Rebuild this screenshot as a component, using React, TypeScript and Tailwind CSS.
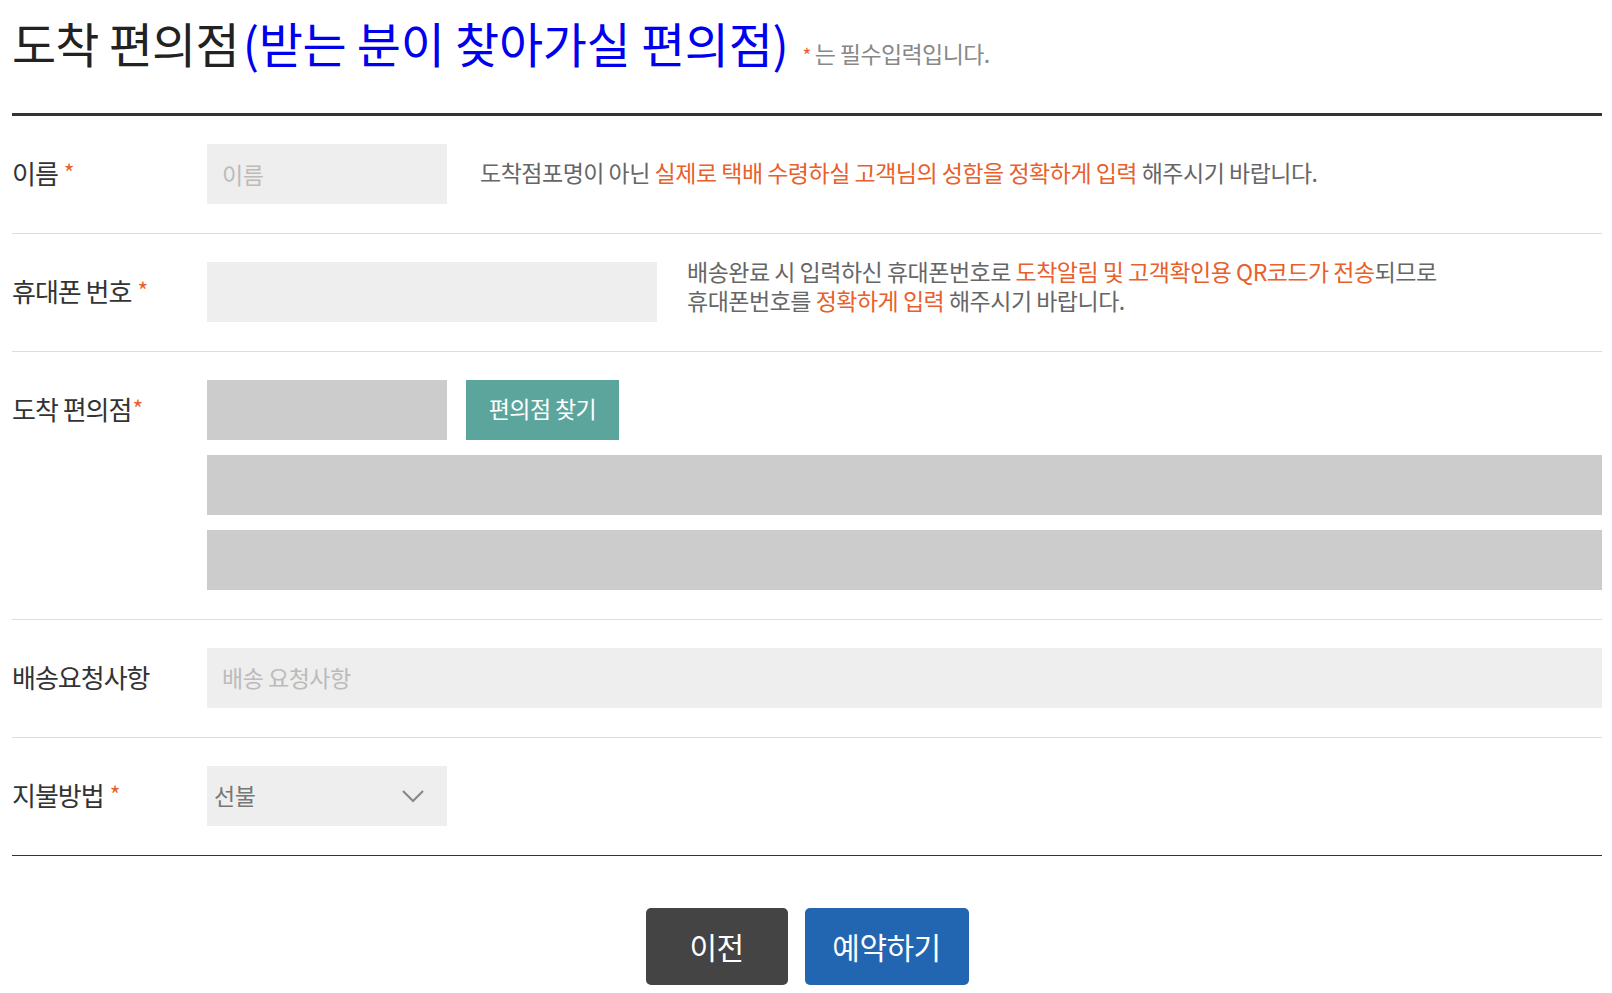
import React from "react";

const font = { fontFamily: '"Noto Sans CJK KR", "Noto Sans", sans-serif' };

function Star({ className = "" }: { className?: string }) {
  return <span className={`text-[#e8602c] ${className}`}>*</span>;
}

function Row({ label, star, starTight, children, last }: { label: string; star?: boolean; starTight?: boolean; children: React.ReactNode; last?: boolean }) {
  return (
    <div className={`flex pt-[28px] pb-[29px] border-b ${last ? "border-[#333]" : "border-[#ddd]"}`}>
      <div className="w-[195px] shrink-0 h-[60px] flex items-center pb-[3px] text-[26px] tracking-[-1px] text-[#333]">
        <span>{label}</span>
        {star && <Star className={starTight ? "ml-[1px] text-[23px]" : "ml-[6px] text-[23px]"} />}
      </div>
      <div className="flex-1 min-w-0">{children}</div>
    </div>
  );
}

export default function App() {
  return (
    <div className="bg-white min-h-[993px] pl-[12px] pr-[10px]" style={font}>
      <div className="flex items-end pt-[10px] pb-[39px] border-b-[3px] border-[#333]">
        <h1 className="text-[48px] leading-[64px] tracking-[-0.8px] font-normal text-[#222]">
          도착 편의점<span className="ml-[4px] tracking-[-0.3px] text-[#0000ee]">(받는 분이 찾아가실 편의점)</span>
        </h1>
        <div className="ml-[14px] mb-[4px] text-[23px] tracking-[-0.6px] text-[#888]">
          <span className="text-[#e8602c] text-[19px] mr-[4px]">*</span>는 필수입력입니다.
        </div>
      </div>

      <Row label="이름" star>
        <div className="flex items-center">
          <div className="w-[240px] h-[60px] bg-[#eeeeee] flex items-center pl-[15px] text-[23px] text-[#bbbbbb] tracking-[-0.5px]">이름</div>
          <p className="ml-[33px] mb-[3px] text-[23px] tracking-[-0.5px] text-[#666]">
            도착점포명이 아닌 <span className="text-[#e8602c]">실제로 택배 수령하실 고객님의 성함을 정확하게 입력</span> 해주시기 바랍니다.
          </p>
        </div>
      </Row>

      <Row label="휴대폰 번호" star>
        <div className="flex items-center h-[60px]">
          <div className="w-[450px] h-[60px] bg-[#eeeeee] shrink-0" />
          <p className="ml-[30px] text-[23px] leading-[29px] tracking-[-0.5px] text-[#666] mb-[12px]">
            배송완료 시 입력하신 휴대폰번호로 <span className="text-[#e8602c]">도착알림 및 고객확인용 QR코드가 전송</span>되므로
            <br />
            휴대폰번호를 <span className="text-[#e8602c]">정확하게 입력</span> 해주시기 바랍니다.
          </p>
        </div>
      </Row>

      <Row label="도착 편의점" star starTight>
        <div className="flex flex-col gap-[15px]">
          <div className="flex gap-[19px]">
            <div className="w-[240px] h-[60px] bg-[#cccccc]" />
            <button className="w-[153px] h-[60px] bg-[#5ca59d] text-white text-[23px] tracking-[-0.6px] flex items-center justify-center pb-[3px]">
              편의점 찾기
            </button>
          </div>
          <div className="h-[60px] bg-[#cccccc]" />
          <div className="h-[60px] bg-[#cccccc]" />
        </div>
      </Row>

      <Row label="배송요청사항">
        <div className="h-[60px] bg-[#eeeeee] flex items-center pl-[15px] pb-[2px] text-[23px] text-[#bbbbbb] tracking-[-0.5px]">배송 요청사항</div>
      </Row>

      <Row label="지불방법" star last>
        <div className="w-[240px] h-[60px] bg-[#eeeeee] flex items-center justify-between pl-[7px] pr-[22px] text-[23px] text-[#777] tracking-[-0.5px]">
          <span className="pb-[2px]">선불</span>
          <svg width="24" height="14" viewBox="0 0 24 14" fill="none">
            <path d="M2 2 L12 12 L22 2" stroke="#888" strokeWidth="2.2" />
          </svg>
        </div>
      </Row>

      <div className="flex justify-center gap-[17px] mt-[52px]">
        <button className="w-[142px] h-[77px] rounded-[5px] bg-[#444444] text-white text-[30px] tracking-[-0.5px]">이전</button>
        <button className="w-[164px] h-[77px] rounded-[5px] bg-[#2266b2] text-white text-[30px] tracking-[-0.5px]">예약하기</button>
      </div>
    </div>
  );
}
